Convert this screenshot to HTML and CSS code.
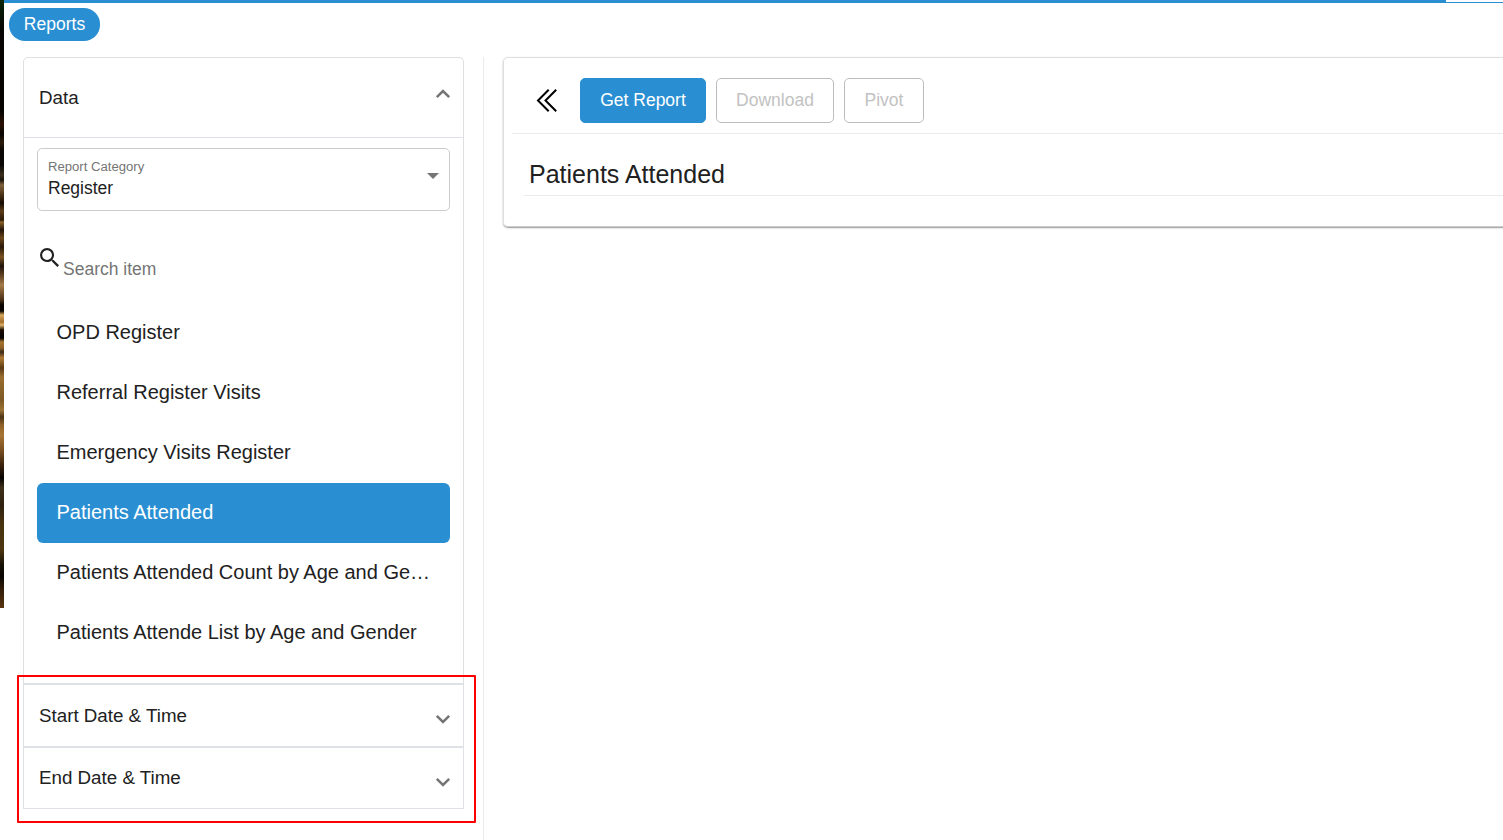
FILE: index.html
```html
<!DOCTYPE html>
<html lang="en">
<head>
<meta charset="utf-8">
<title>Reports</title>
<link rel="stylesheet" href="styles.css">
</head>
<body>
<div class="backdrop"></div>
<div class="app">
  <div class="progress"><div class="progress-fill"></div></div>
  <nav class="tabs"><a class="tab">Reports</a></nav>
  <main class="content">
    <aside class="sidebar">
      <section class="panel panel-data">
        <header class="panel-header data-header">
          <span>Data</span>
          <svg class="chevron" viewBox="0 0 16 10"><path d="M1.8 8.2 8 2l6.2 6.2"/></svg>
        </header>
        <div class="panel-body">
          <div class="select">
            <div>
              <div class="select-label">Report Category</div>
              <div class="select-value">Register</div>
            </div>
            <svg class="caret" viewBox="0 0 12 6"><path d="M0 0h12L6 6z"/></svg>
          </div>
          <div class="search">
            <svg class="search-icon" viewBox="3 3 17.5 17.5"><path d="M15.5 14h-.79l-.28-.27A6.47 6.47 0 0 0 16 9.5 6.5 6.5 0 1 0 9.5 16c1.61 0 3.09-.59 4.23-1.57l.27.28v.79l5 4.99L20.49 19l-4.99-5zm-6 0C7.01 14 5 11.99 5 9.5S7.01 5 9.5 5 14 7.01 14 9.5 11.99 14 9.5 14z"/></svg>
            <span class="search-text">Search item</span>
          </div>
          <ul class="report-list">
            <li class="report">OPD Register</li>
            <li class="report">Referral Register Visits</li>
            <li class="report">Emergency Visits Register</li>
            <li class="report selected">Patients Attended</li>
            <li class="report">Patients Attended Count by Age and Gender</li>
            <li class="report">Patients Attende List by Age and Gender</li>
          </ul>
        </div>
      </section>
      <section class="panel panel-date">
        <header class="panel-header date-header">
          <span>Start Date &amp; Time</span>
          <svg class="chevron" viewBox="0 0 16 10"><path d="M1.8 1.8 8 8l6.2-6.2"/></svg>
        </header>
      </section>
      <section class="panel panel-date panel-last">
        <header class="panel-header date-header">
          <span>End Date &amp; Time</span>
          <svg class="chevron" viewBox="0 0 16 10"><path d="M1.8 1.8 8 8l6.2-6.2"/></svg>
        </header>
      </section>
      <div class="highlight"></div>
    </aside>
    <section class="report-area">
      <div class="card">
        <div class="toolbar">
          <svg class="collapse" viewBox="0 0 22 24"><path d="M12.700 1.700 2 12.500l10.700 10.800M20.200 1.700 9.500 12.500l10.700 10.800"/></svg>
          <button class="btn btn-primary">Get Report</button>
          <button class="btn btn-download" disabled>Download</button>
          <button class="btn btn-pivot" disabled>Pivot</button>
        </div>
        <h1 class="title">Patients Attended</h1>
      </div>
    </section>
  </main>
</div>
</body>
</html>
```
FILE: styles.css
```css
* { box-sizing: border-box; }
body {
  margin: 0;
  height: 840px;
  display: flex;
  overflow: hidden;
  background: #fff;
  color: #212121;
  font-family: "Liberation Sans", Arial, sans-serif;
}
.backdrop {
  flex: none;
  width: 4px;
  height: 608px;
  background: linear-gradient(#0b2608 0, #061a05 10px, #090704 28px, #050302 110px, #2a0f02 124px, #080402 134px, #2b1a0b 142px, #0b0704 150px, #090705 165px, #3a2e1c 175px, #1b140c 180px, #80613c 185px, #4a3015 195px, #140b04 203px, #5b3c18 211px, #2c1a08 220px, #8a6128 222px, #24150a 230px, #6b4519 238px, #2a1909 247px, #7a5122 257px, #20130a 266px, #5c3f20 275px, #a57a48 285px, #4a2f15 300px, #070402 305px, #090502 311px, #d8a85c 315px, #a36e2c 322px, #e0b368 325px, #1a0b03 330px, #080301 338px, #a87330 342px, #8d6127 348px, #3d2a1c 352px, #b07a30 358px, #5a3a16 368px, #9a6e2e 377px, #7b5826 400px, #9b7232 410px, #4c3417 417px, #8f6128 425px, #a87434 435px, #7a5021 450px, #3c220c 465px, #050301 478px, #40301a 488px, #2f2110 505px, #49330f 525px, #4c3510 550px, #171005 565px, #080502 576px, #2c1a08 587px, #5a3410 608px);
}
.app {
  flex: 1;
  min-width: 0;
  display: flex;
  flex-direction: column;
}
.progress {
  flex: none;
  height: 3px;
  border-bottom: 1px solid #2a8fd2;
}
.progress-fill { width: 1442px; height: 2px; background: #2a8fd2; }
.tabs { flex: none; height: 54px; padding: 5px 5px 0; }
.tab {
  display: block;
  width: 91px;
  height: 33px;
  border-radius: 16px;
  background: #2a8fd2;
  color: #fff;
  font-size: 17.5px;
  line-height: 32px;
  text-align: center;
}
.content { flex: 1; display: flex; padding-left: 19px; }
.sidebar { position: relative; flex: none; width: 441px; }
.panel { border: 1px solid #dee2e6; }
.panel-data { height: 627px; border-radius: 5px 5px 0 0; border-color: #dedfe1 #dedfe1 #dee2e6; }
.panel-date { height: 63px; }
.panel-last { height: 62px; }
.panel-header {
  display: flex;
  align-items: center;
  justify-content: space-between;
  padding: 0 12px 0 15px;
  font-size: 18.75px;
}
.data-header { height: 80px; border-bottom: 1px solid #dee2e6; }
.data-header .chevron { margin-top: -7px; }
.date-header { height: 61px; }
.panel-last .date-header { height: 59px; }
.date-header .chevron { margin-top: 7px; }
.panel-last .chevron { margin-top: 9px; }
.chevron {
  width: 16px;
  height: 10px;
  fill: none;
  stroke: #757575;
  stroke-width: 2.5;
}
.panel-body { padding: 10px 13px 0; }
.select {
  display: flex;
  justify-content: space-between;
  height: 63px;
  padding: 10px 10px 0;
  border: 1px solid #ccc;
  border-radius: 5px;
}
.select-label { font-size: 13.125px; line-height: 15px; color: #757575; }
.select-value { margin-top: 4px; font-size: 17.5px; line-height: 20px; }
.caret { width: 12px; height: 6px; margin-top: 14px; fill: #757575; }
.search { display: flex; height: 92px; padding: 37px 0 0 3px; }
.search-icon { width: 19px; height: 19px; fill: #212121; }
.search-text {
  margin: 11px 0 0 4px;
  font-size: 17.5px;
  line-height: 20px;
  color: #757575;
}
.report-list { margin: 0; padding: 0; list-style: none; }
.report {
  height: 60px;
  padding: 0 19.5px;
  overflow: hidden;
  text-overflow: ellipsis;
  white-space: nowrap;
  font-size: 20px;
  line-height: 58px;
  border-radius: 6px;
}
.selected { background: #2a8fd2; color: #fff; }
.highlight {
  position: absolute;
  left: -6px;
  top: 618px;
  width: 459px;
  height: 148px;
  border: 2px solid #f00;
  border-radius: 1px;
}
.report-area {
  flex: 1;
  min-width: 0;
  margin-left: 19px;
  padding-left: 19px;
  border-left: 1px solid #ebebeb;
}
.card {
  width: 1020px;
  height: 170px;
  padding: 20px 0 0 8px;
  border: 1px solid #dedede;
  border-bottom-color: #ccc;
  border-radius: 5px;
  box-shadow: 0 1px 1px rgba(0, 0, 0, .3), 0 1px 3px rgba(0, 0, 0, .12);
}
.toolbar {
  display: flex;
  gap: 10px;
  height: 56px;
  padding-left: 24px;
  border-bottom: 1px solid #ebebeb;
}
.collapse {
  flex: none;
  width: 22px;
  height: 24px;
  margin: 10px 12px 0 0;
  fill: none;
  stroke: #000;
  stroke-width: 2;
}
.btn {
  flex: none;
  height: 45px;
  padding: 0 0 1px;
  border: 1px solid #bdbdbd;
  border-radius: 5px;
  background: #fff;
  font: 17.5px "Liberation Sans", Arial, sans-serif;
  color: #c2c2c2;
}
.btn-primary { width: 126px; background: #2a8fd2; border-color: #2a8fd2; color: #fff; }
.btn-download { width: 118px; }
.btn-pivot { width: 80px; }
.title {
  height: 62px;
  margin: 0 0 0 12px;
  padding: 26px 0 0 5px;
  border-bottom: 1px solid #ebebeb;
  font-size: 25px;
  line-height: 29px;
  font-weight: 400;
}
```
